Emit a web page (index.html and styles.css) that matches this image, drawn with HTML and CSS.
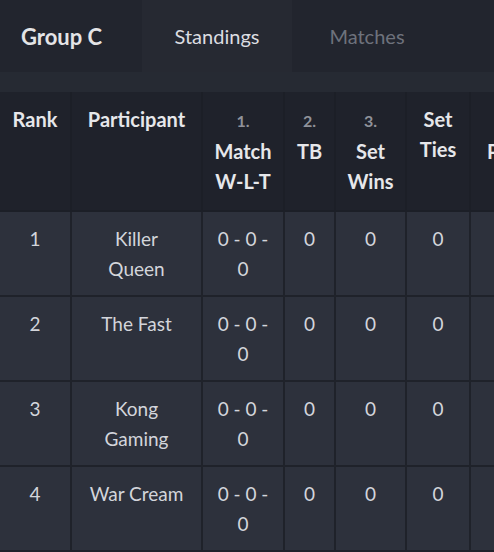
FILE: index.html
```html
<!DOCTYPE html>
<html>
<head>
<meta charset="utf-8">
<link rel="stylesheet" href="styles.css">
</head>
<body>
<div class="page">
  <div class="tabs">
    <div class="title">Group C</div>
    <div class="tab active">Standings</div>
    <div class="tab">Matches</div>
  </div>
  <div class="band"></div>
  <div class="table-wrap">
    <table class="standings">
      <colgroup>
        <col class="c-rank"><col class="c-part"><col class="c-match"><col class="c-tb"><col class="c-wins"><col class="c-ties"><col class="c-next">
      </colgroup>
      <thead>
        <tr>
          <th>Rank</th>
          <th>Participant</th>
          <th><span class="num">1.</span><br>Match<br>W-L-T</th>
          <th><span class="num">2.</span><br>TB</th>
          <th><span class="num">3.</span><br>Set<br>Wins</th>
          <th>Set<br>Ties</th>
          <th><span class="num">4.</span><br>Points</th>
        </tr>
      </thead>
      <tbody>
        <tr><td>1</td><td>Killer<br>Queen</td><td>0 - 0 -<br>0</td><td>0</td><td>0</td><td>0</td><td></td></tr>
        <tr><td>2</td><td>The Fast</td><td>0 - 0 -<br>0</td><td>0</td><td>0</td><td>0</td><td></td></tr>
        <tr><td>3</td><td>Kong<br>Gaming</td><td>0 - 0 -<br>0</td><td>0</td><td>0</td><td>0</td><td></td></tr>
        <tr><td>4</td><td>War Cream</td><td>0 - 0 -<br>0</td><td>0</td><td>0</td><td>0</td><td></td></tr>
      </tbody>
    </table>
  </div>
</div>
</body>
</html>
```
FILE: styles.css
```css
html, body {
  margin: 0;
  padding: 0;
  background: #2d313c;
  overflow: hidden;
}
body {
  font-family: "Source Sans Pro", Lato, "Noto Sans", sans-serif;
  color: #d3d5db;
}
.page {
  width: 494px;
  height: 552px;
  overflow: hidden;
}
.tabs {
  display: flex;
  height: 72px;
  background: #22252e;
}
.title {
  width: 121px;
  padding-left: 21px;
  display: flex;
  align-items: center;
  font-size: 22px;
  font-weight: 700;
  color: #e4e4e6;
}
.tab {
  width: 150px;
  display: flex;
  align-items: center;
  justify-content: center;
  font-size: 20px;
  color: #6e727c;
}
.tab.active {
  background: #262932;
  color: #dcdde1;
}
.band {
  height: 20px;
  background: #262a33;
}
.table-wrap {
  width: 494px;
  overflow: hidden;
}
.standings {
  border-collapse: collapse;
  table-layout: fixed;
  width: 560px;
}
.c-rank { width: 71px; }
.c-part { width: 131px; }
.c-match { width: 82px; }
.c-tb { width: 51px; }
.c-wins { width: 71px; }
.c-ties { width: 64px; }
.c-next { width: 90px; }
.standings th {
  background: #1f222b;
  height: 116px;
  box-sizing: border-box;
  padding: 12px 2px 14px;
  vertical-align: top;
  font-size: 20px;
  font-weight: 700;
  line-height: 30px;
  color: #e6e7ea;
  border-left: 2px solid #1c1f27;
  border-right: 2px solid #1c1f27;
  border-bottom: 2px solid #1c1f27;
}
.standings th:first-child { border-left: none; }
.standings th .num {
  font-size: 16px;
  color: #8f929a;
}
.standings td {
  background: #2d313c;
  height: 83px;
  box-sizing: border-box;
  padding: 12px 4px 11px;
  vertical-align: top;
  text-align: center;
  font-size: 19px;
  line-height: 30px;
  color: #d3d5db;
  border: 2px solid #1f222a;
}
.standings td:first-child { border-left: none; }
```
